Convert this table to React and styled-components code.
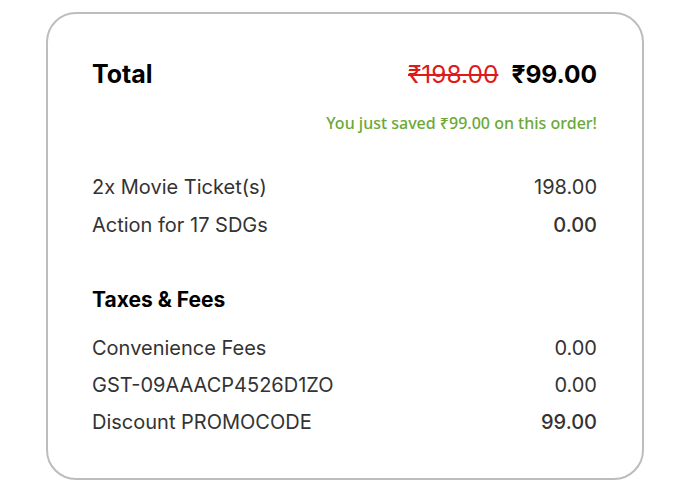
import React from "react";
import styled, { createGlobalStyle } from "styled-components";

const Global = createGlobalStyle`
  html, body { margin: 0; padding: 0; background: #fff; }
  body { font-family: "Inter", "Liberation Sans", sans-serif; }
`;

const Page = styled.div`
  padding: 12px 0 0 46px;
`;

const Card = styled.div`
  box-sizing: border-box;
  width: 598px;
  height: 468px;
  border: 2px solid #bdbdbd;
  border-radius: 30px;
  padding: 46px 45px 0 44px;
  display: flex;
  flex-direction: column;
`;

const TotalRow = styled.div`
  display: flex;
  justify-content: space-between;
  align-items: center;
  height: 28px;
`;

const TotalLabel = styled.div`
  font-family: "Inter", sans-serif;
  font-weight: 700;
  font-size: 25px;
  color: #000;
`;

const Prices = styled.div`
  display: flex;
  align-items: center;
  gap: 13px;
`;

const OldPrice = styled.span`
  font-family: "Inter", sans-serif;
  font-size: 24.5px;
  color: #de1a1a;
  text-decoration: line-through;
  text-decoration-thickness: 2px;
`;

const NewPrice = styled.span`
  font-family: "Inter", sans-serif;
  font-size: 24.5px;
  font-weight: 700;
  color: #000;
`;

const Saved = styled.div`
  margin-top: 25px;
  text-align: right;
  font-family: "Noto Sans", sans-serif;
  font-size: 16px;
  font-weight: 500;
  color: #6aa936;
  height: 20px;
  line-height: 20px;
`;

const Section = styled.div`
  display: flex;
  flex-direction: column;
  margin-top: ${(p) => p.$top}px;
`;

const Row = styled.div`
  display: flex;
  justify-content: space-between;
  align-items: center;
  height: ${(p) => p.$h || 38}px;
  font-family: "Inter", sans-serif;
  font-size: 20px;
  color: #333;
`;

const Value = styled.span`
  font-weight: ${(p) => (p.$bold ? 500 : 400)};
`;

const Heading = styled.div`
  font-family: "Inter", sans-serif;
  font-weight: 700;
  font-size: 21px;
  color: #000;
  height: 28px;
  line-height: 28px;
  margin-bottom: 15px;
`;

export default function App() {
  return (
    <>
      <Global />
      <Page>
        <Card>
          <TotalRow>
            <TotalLabel>Total</TotalLabel>
            <Prices>
              <OldPrice>₹198.00</OldPrice>
              <NewPrice>₹99.00</NewPrice>
            </Prices>
          </TotalRow>
          <Saved>You just saved ₹99.00 on this order!</Saved>
          <Section $top={35}>
            <Row>
              <span>2x Movie Ticket(s)</span>
              <Value>198.00</Value>
            </Row>
            <Row>
              <span>Action for 17 SDGs</span>
              <Value $bold>0.00</Value>
            </Row>
          </Section>
          <Section $top={42}>
            <Heading>Taxes &amp; Fees</Heading>
            <Row $h={37}>
              <span>Convenience Fees</span>
              <Value>0.00</Value>
            </Row>
            <Row $h={37}>
              <span>GST-09AAACP4526D1ZO</span>
              <Value>0.00</Value>
            </Row>
            <Row $h={37}>
              <span>Discount PROMOCODE</span>
              <Value $bold>99.00</Value>
            </Row>
          </Section>
        </Card>
      </Page>
    </>
  );
}
